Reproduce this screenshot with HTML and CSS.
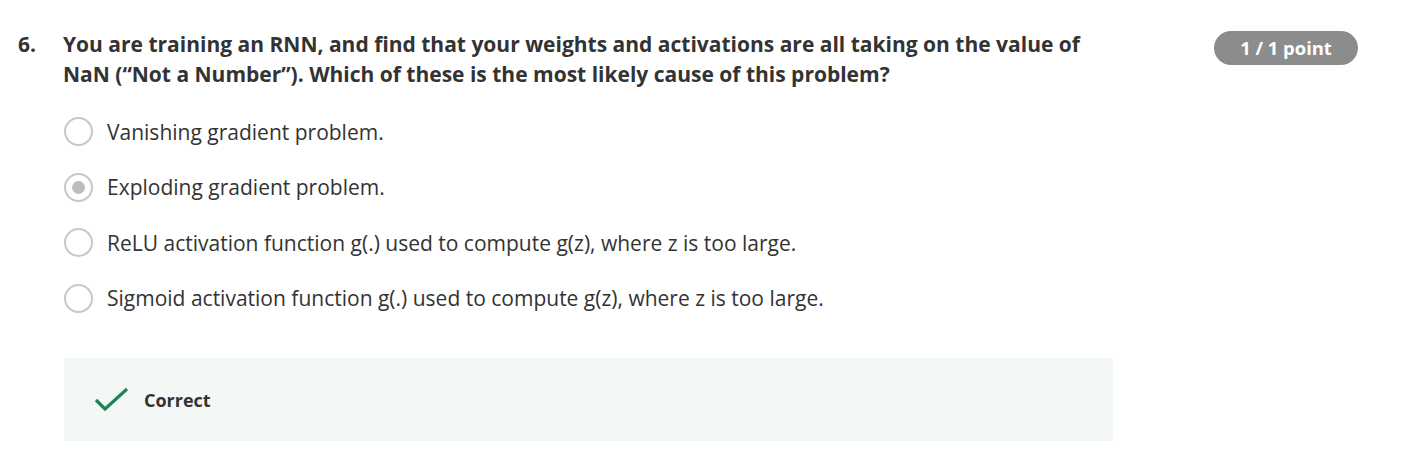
FILE: index.html
```html
<!DOCTYPE html>
<html>
<head>
<meta charset="utf-8">
<link rel="stylesheet" href="styles.css">
</head>
<body>
<div class="question">
  <div class="num">6.</div>
  <div class="main">
    <div class="head">
      <div class="prompt">You are training an RNN, and find that your weights and activations are all taking on the value of NaN (“Not a Number”). Which of these is the most likely cause of this problem?</div>
      <div class="badge">1 / 1 point</div>
    </div>
    <div class="options">
      <div class="option"><span class="radio"></span><span class="label">Vanishing gradient problem.</span></div>
      <div class="option"><span class="radio checked"></span><span class="label">Exploding gradient problem.</span></div>
      <div class="option"><span class="radio"></span><span class="label">ReLU activation function g(.) used to compute g(z), where z is too large.</span></div>
      <div class="option"><span class="radio"></span><span class="label">Sigmoid activation function g(.) used to compute g(z), where z is too large.</span></div>
    </div>
    <div class="feedback">
      <svg class="check" width="36" height="26" viewBox="0 0 36 26"><path d="M2 13 L11 22 L33 2" fill="none" stroke="#1f8354" stroke-width="3.2"/></svg>
      <span class="fb-text">Correct</span>
    </div>
  </div>
</div>
</body>
</html>
```
FILE: styles.css
```css
body {
  margin: 0;
  font-family: "Open Sans", "Liberation Sans", sans-serif;
  color: #333;
  background: #fff;
}
.question {
  display: flex;
  padding: 29px 0 0 18px;
}
.num {
  width: 45px;
  font-size: 21px;
  font-weight: 700;
  line-height: 30px;
  color: #333;
}
.main {
  flex: 0 0 1295px;
}
.head {
  display: flex;
  align-items: flex-start;
}
.prompt {
  width: 1040px;
  font-size: 21px;
  font-weight: 700;
  line-height: 30px;
  color: #333;
}
.badge {
  margin-left: 111px;
  margin-top: 2px;
  width: 144px;
  height: 34px;
  border-radius: 17px;
  background: #8c8c8c;
  color: #fff;
  font-size: 18.4px;
  font-weight: 700;
  line-height: 34px;
  text-align: center;
}
.options {
  margin-top: 15px;
  display: flex;
  flex-direction: column;
}
.option {
  display: flex;
  align-items: center;
  height: 55.5px;
}
.radio {
  box-sizing: border-box;
  width: 29px;
  height: 29px;
  border: 2px solid #c8c8c8;
  border-radius: 50%;
  margin-left: 1px;
  display: flex;
  align-items: center;
  justify-content: center;
}
.radio.checked::after {
  content: "";
  width: 13px;
  height: 13px;
  border-radius: 50%;
  background: #bdbdbd;
}
.label {
  margin-left: 14px;
  font-size: 21px;
  line-height: 26px;
  color: #333;
}
.feedback {
  margin-top: 32px;
  margin-left: 1px;
  width: 1049px;
  height: 83px;
  background: #f3f8f7;
  display: flex;
  align-items: center;
}
.check {
  margin-left: 30px;
}
.fb-text {
  margin-left: 14px;
  font-size: 18px;
  font-weight: 700;
  color: #333;
}
```
